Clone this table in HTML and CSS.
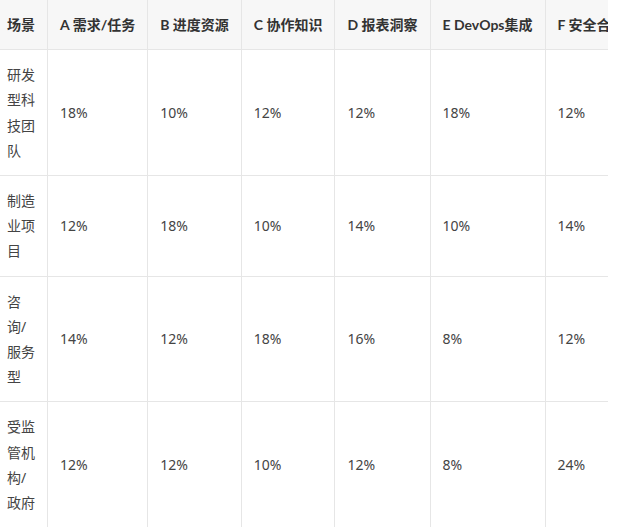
FILE: index.html
```html
<!DOCTYPE html>
<html lang="zh">
<head>
<meta charset="utf-8">
<link rel="stylesheet" href="styles.css">
</head>
<body>
<div class="scroller">
  <table class="grid">
    <thead>
      <tr>
        <th>场景</th>
        <th>A 需求/任务</th>
        <th>B 进度资源</th>
        <th>C 协作知识</th>
        <th>D 报表洞察</th>
        <th>E DevOps集成</th>
        <th>F 安全合规</th>
      </tr>
    </thead>
    <tbody>
      <tr>
        <td>研发型科技团队</td>
        <td>18%</td><td>10%</td><td>12%</td><td>12%</td><td>18%</td><td>12%</td>
      </tr>
      <tr>
        <td>制造业项目</td>
        <td>12%</td><td>18%</td><td>10%</td><td>14%</td><td>10%</td><td>14%</td>
      </tr>
      <tr>
        <td>咨询/服务型</td>
        <td>14%</td><td>12%</td><td>18%</td><td>16%</td><td>8%</td><td>12%</td>
      </tr>
      <tr>
        <td>受监管机构/政府</td>
        <td>12%</td><td>12%</td><td>10%</td><td>12%</td><td>8%</td><td>24%</td>
      </tr>
    </tbody>
  </table>
</div>
</body>
</html>
```
FILE: styles.css
```css
html, body {
  margin: 0;
  padding: 0;
  background: #ffffff;
}
.scroller {
  width: 608px;
  overflow: hidden;
}
.grid {
  width: 1px;
  margin: -1px 0 0 -6px;
  border-collapse: collapse;
  font-family: "Noto Sans", "Noto Sans CJK SC", sans-serif;
  font-size: 14px;
  line-height: 25.2px;
  color: #444;
}
.grid th,
.grid td {
  border: 1px solid #e6e6e6;
  padding: 12px 12px;
  text-align: left;
  vertical-align: middle;
}
.grid th {
  background: #f7f7f7;
  font-family: "Lato", "Noto Sans CJK SC", sans-serif;
  font-weight: 700;
  color: #333;
  white-space: nowrap;
}
```
